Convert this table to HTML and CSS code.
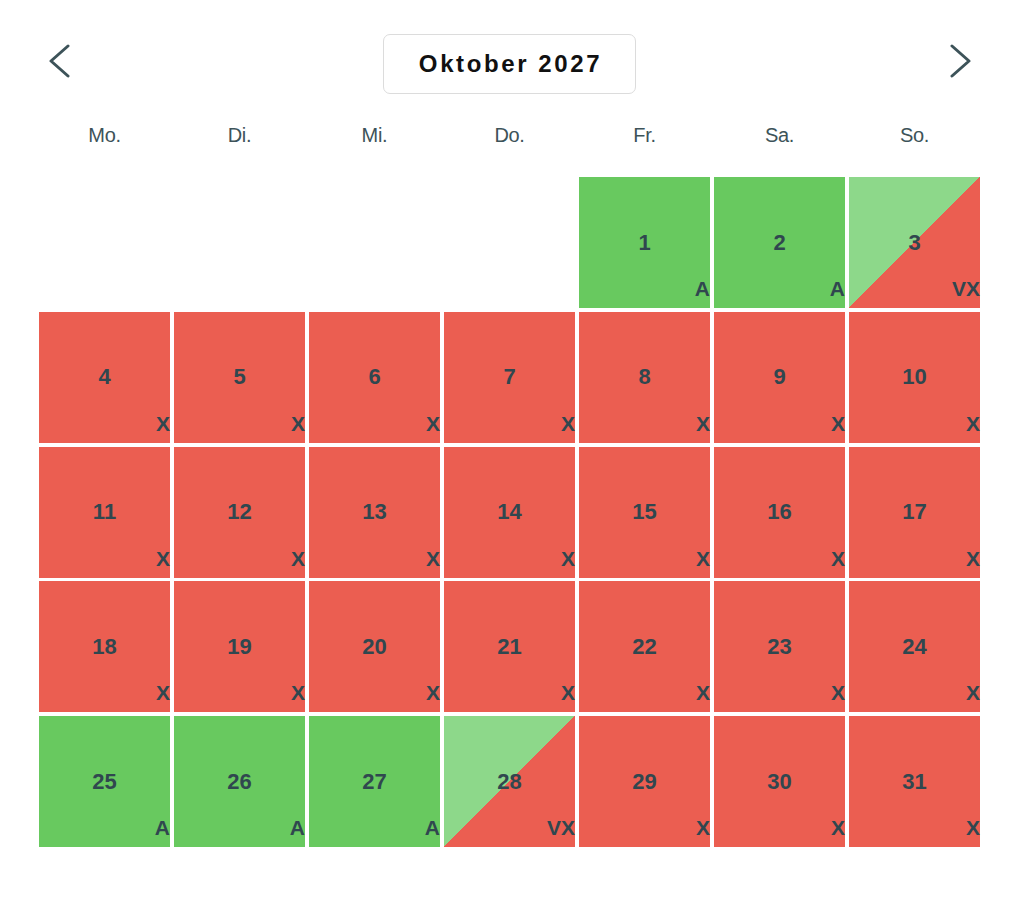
FILE: index.html
```html
<!DOCTYPE html>
<html lang="de">
<head>
<meta charset="utf-8">
<title>Oktober 2027</title>
<link rel="stylesheet" href="styles.css">
</head>
<body>
<div class="calendar">
  <div class="header">
    <button class="nav" aria-label="Vorheriger Monat">
      <svg width="24" height="36" viewBox="0 0 24 36"><polyline points="19,3 2,18 19,33" fill="none" stroke="#3d5359" stroke-width="3" stroke-linecap="round" stroke-linejoin="round"/></svg>
    </button>
    <div class="title">Oktober 2027</div>
    <button class="nav" aria-label="Nächster Monat">
      <svg width="24" height="36" viewBox="0 0 24 36"><polyline points="5,3 22,18 5,33" fill="none" stroke="#3d5359" stroke-width="3" stroke-linecap="round" stroke-linejoin="round"/></svg>
    </button>
  </div>
  <div class="weekdays">
    <div>Mo.</div><div>Di.</div><div>Mi.</div><div>Do.</div><div>Fr.</div><div>Sa.</div><div>So.</div>
  </div>
  <div class="grid">
    <div class="empty"></div><div class="empty"></div><div class="empty"></div><div class="empty"></div>
    <div class="day green"><span class="num">1</span><span class="tag">A</span></div>
    <div class="day green"><span class="num">2</span><span class="tag">A</span></div>
    <div class="day split"><span class="num">3</span><span class="tag">VX</span></div>
    <div class="day red"><span class="num">4</span><span class="tag">X</span></div>
    <div class="day red"><span class="num">5</span><span class="tag">X</span></div>
    <div class="day red"><span class="num">6</span><span class="tag">X</span></div>
    <div class="day red"><span class="num">7</span><span class="tag">X</span></div>
    <div class="day red"><span class="num">8</span><span class="tag">X</span></div>
    <div class="day red"><span class="num">9</span><span class="tag">X</span></div>
    <div class="day red"><span class="num">10</span><span class="tag">X</span></div>
    <div class="day red"><span class="num">11</span><span class="tag">X</span></div>
    <div class="day red"><span class="num">12</span><span class="tag">X</span></div>
    <div class="day red"><span class="num">13</span><span class="tag">X</span></div>
    <div class="day red"><span class="num">14</span><span class="tag">X</span></div>
    <div class="day red"><span class="num">15</span><span class="tag">X</span></div>
    <div class="day red"><span class="num">16</span><span class="tag">X</span></div>
    <div class="day red"><span class="num">17</span><span class="tag">X</span></div>
    <div class="day red"><span class="num">18</span><span class="tag">X</span></div>
    <div class="day red"><span class="num">19</span><span class="tag">X</span></div>
    <div class="day red"><span class="num">20</span><span class="tag">X</span></div>
    <div class="day red"><span class="num">21</span><span class="tag">X</span></div>
    <div class="day red"><span class="num">22</span><span class="tag">X</span></div>
    <div class="day red"><span class="num">23</span><span class="tag">X</span></div>
    <div class="day red"><span class="num">24</span><span class="tag">X</span></div>
    <div class="day green"><span class="num">25</span><span class="tag">A</span></div>
    <div class="day green"><span class="num">26</span><span class="tag">A</span></div>
    <div class="day green"><span class="num">27</span><span class="tag">A</span></div>
    <div class="day split"><span class="num">28</span><span class="tag">VX</span></div>
    <div class="day red"><span class="num">29</span><span class="tag">X</span></div>
    <div class="day red"><span class="num">30</span><span class="tag">X</span></div>
    <div class="day red"><span class="num">31</span><span class="tag">X</span></div>
  </div>
</div>
</body>
</html>
```
FILE: styles.css
```css
html, body {
  margin: 0;
  padding: 0;
  background: #ffffff;
}

body {
  font-family: "Liberation Sans", Arial, sans-serif;
}

.calendar {
  width: 941px;
  margin-left: 39px;
  padding-top: 34px;
}

.header {
  display: flex;
  align-items: center;
  justify-content: space-between;
  height: 60px;
}

.nav {
  background: none;
  border: none;
  padding: 0 9px 0 10px;
  margin: 0;
  display: flex;
  align-items: center;
  cursor: pointer;
  height: 60px;
  margin-top: -6px;
}

.title {
  box-sizing: border-box;
  width: 253px;
  height: 60px;
  border: 1.5px solid #dcdcdc;
  border-radius: 7px;
  display: flex;
  align-items: center;
  justify-content: center;
  font-weight: bold;
  font-size: 24px;
  letter-spacing: 2.6px;
  color: #111111;
  padding-left: 2px;
}

.weekdays {
  display: grid;
  grid-template-columns: repeat(7, 131px);
  column-gap: 4px;
  height: 50px;
  margin-top: 16px;
  align-items: center;
}

.weekdays div {
  text-align: center;
  font-size: 20px;
  color: #3d5359;
  letter-spacing: -0.3px;
}

.grid {
  display: grid;
  grid-template-columns: repeat(7, 131px);
  grid-auto-rows: 131px;
  column-gap: 4px;
  row-gap: 3.75px;
  margin-top: 17px;
}

.day {
  position: relative;
  display: flex;
  align-items: center;
  justify-content: center;
  color: #30474f;
  font-weight: bold;
}

.green {
  background: #68c95f;
}

.red {
  background: #eb5e51;
}

.split {
  background: linear-gradient(to bottom right, #8dd88a 50%, #eb5e51 50%);
}

.num {
  font-size: 22px;
}

.tag {
  position: absolute;
  right: 0;
  bottom: 9px;
  font-size: 21px;
  line-height: 20px;
}
```
